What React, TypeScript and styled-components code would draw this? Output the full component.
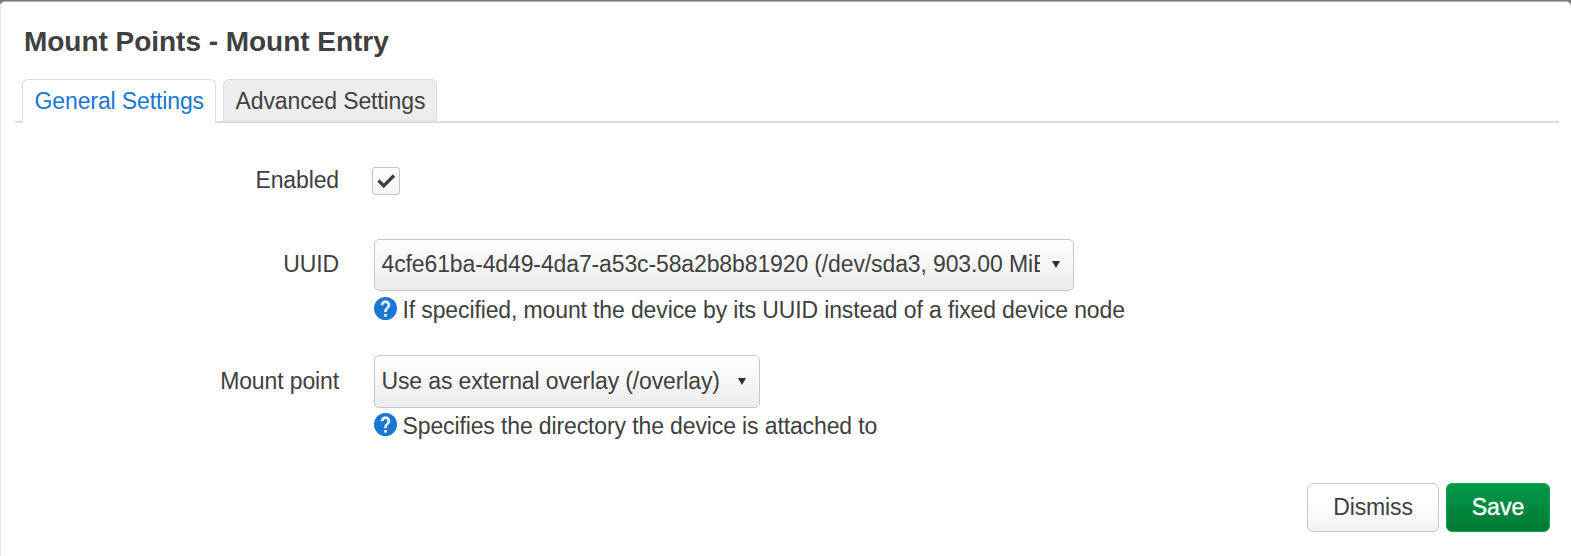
import React from 'react';
import styled, { createGlobalStyle, css } from 'styled-components';

const GlobalStyle = createGlobalStyle`
  * { box-sizing: border-box; }
  body {
    margin: 0;
    overflow: hidden;
    background: #7b7979;
    color: #404040;
    font-family: "Liberation Sans", Arial, Helvetica, sans-serif;
    font-size: 23px;
    line-height: 26px;
    letter-spacing: -0.123px;
    font-feature-settings: "liga" 1;
  }
`;

const Modal = styled.div`
  height: 556px;
  margin-top: 1px;
  padding: 0 12px 0 14px;
  display: flex;
  flex-direction: column;
  background: #fff;
  border: 1px solid #b4b2b2;
  border-left-color: #e8e8e8;
  border-right: 0;
  border-radius: 5px 5px 0 0;
`;

const Title = styled.h4`
  margin: 0;
  padding: 23px 0 0 9px;
  height: 77px;
  font-size: 28px;
  line-height: 34px;
  letter-spacing: -0.03px;
  font-weight: bold;
  white-space: nowrap;
`;

const Tabs = styled.ul`
  list-style: none;
  margin: 0;
  padding: 0 7px;
  display: flex;
  gap: 7px;
  height: 44px;
  border-bottom: 2px solid #dcdcdc;
`;

const Tab = styled.li<{ $active?: boolean; $width: number }>`
  width: ${p => p.$width}px;
  height: 42px;
  padding: 8px 0 0 11.6px;
  border: 1px solid #dcdcdc;
  border-bottom: 0;
  border-radius: 6px 6px 0 0;
  background: linear-gradient(#eee 92%, #e6e6e6);
  white-space: nowrap;
  ${p => p.$active && css`
    height: 44px;
    background: #fff;
    color: #1976d2;
  `}
`;

const Form = styled.div`
  padding-top: 43px;
`;

const Row = styled.div<{ $height: number }>`
  display: flex;
  height: ${p => p.$height}px;
`;

const Label = styled.label<{ $top: number }>`
  width: 324px;
  padding-top: ${p => p.$top}px;
  text-align: right;
  white-space: nowrap;
`;

const Field = styled.div`
  margin-left: 35px;
`;

const Checkbox = styled.span`
  display: block;
  width: 28px;
  height: 28px;
  margin: 1px 0 0 -2px;
  border: 1px solid #c4c4c4;
  border-radius: 3px;
  background: linear-gradient(#fff, #f5f5f5);
  svg { display: block; }
`;

const Select = styled.div<{ $width: number; $height: number }>`
  display: flex;
  align-items: center;
  width: ${p => p.$width}px;
  height: ${p => p.$height}px;
  padding: 0 13px 2px 6.5px;
  border: 1px solid #c6c6c6;
  border-radius: 5px;
  background: linear-gradient(#fff, #f6f6f6 50%, #ebebeb);
`;

const Value = styled.span`
  flex: 1;
  min-width: 0;
  overflow: hidden;
  white-space: nowrap;
`;

const Arrow = styled.svg`
  width: 8px;
  height: 7px;
  margin: 1px 0 0 12px;
  fill: #303030;
`;

const Help = styled.div<{ $top: number }>`
  display: flex;
  align-items: flex-start;
  gap: 5.5px;
  padding-top: ${p => p.$top}px;
  white-space: nowrap;
  svg { flex: none; }
`;

const Actions = styled.div`
  display: flex;
  justify-content: flex-end;
  gap: 7px;
  padding: 0 9px;
`;

const Button = styled.button<{ $primary?: boolean }>`
  width: 132px;
  height: 49px;
  padding: 0 0 2px;
  font: inherit;
  letter-spacing: inherit;
  color: #404040;
  border: 1px solid #c8c8c8;
  border-radius: 6px;
  background: linear-gradient(#fff 30%, #f3f3f3);
  ${p => p.$primary && css`
    width: 104px;
    letter-spacing: 0;
    color: #fff;
    -webkit-text-stroke: 0.4px #fff;
    border-color: #00a857;
    background: linear-gradient(#009a4b, #007832);
  `}
`;

const HelpIcon = () => (
  <svg width="23" height="23" viewBox="1.8 1.8 20.4 20.4">
    <circle cx="12" cy="12" r="10.2" fill="#1976d2" />
    <path
      fill="#fff"
      stroke="#fff"
      strokeWidth="0.3"
      d="M13 19h-2v-2h2v2zm2.07-7.75l-.9.92C13.45 12.9 13 13.5 13 15h-2v-.5c0-1.100.45-2.100 1.170-2.830l1.240-1.260c.37-.36.59-.86.59-1.410 0-1.100-.9-2-2-2s-2 .9-2 2H8c0-2.210 1.790-4 4-4s4 1.790 4 4c0 .88-.36 1.680-.93 2.250z"
    />
  </svg>
);

const Caret = () => (
  <Arrow viewBox="0 0 8 7"><path d="M0 0h8L4 7z" /></Arrow>
);

export default function App() {
  return (
    <>
      <GlobalStyle />
      <Modal>
        <Title>Mount Points - Mount Entry</Title>
        <Tabs>
          <Tab $active $width={194}>General Settings</Tab>
          <Tab $width={214}>Advanced Settings</Tab>
        </Tabs>
        <Form>
          <Row $height={73}>
            <Label $top={1}>Enabled</Label>
            <Field>
              <Checkbox>
                <svg width="26" height="26" viewBox="0 0 26 26">
                  <path d="M5.500 12.500l5.200 5.300L21 7.500" fill="none" stroke="#404040" strokeWidth="3.300" />
                </svg>
              </Checkbox>
            </Field>
          </Row>
          <Row $height={116}>
            <Label $top={12}>UUID</Label>
            <Field>
              <Select $width={700} $height={52}>
                <Value>4cfe61ba-4d49-4da7-a53c-58a2b8b81920 (/dev/sda3, 903.00 MiB)</Value>
                <Caret />
              </Select>
              <Help $top={6}><HelpIcon /><span>If specified, mount the device by its UUID instead of a fixed device node</span></Help>
            </Field>
          </Row>
          <Row $height={128}>
            <Label $top={13}>Mount point</Label>
            <Field>
              <Select $width={386} $height={53}>
                <Value>Use as external overlay (/overlay)</Value>
                <Caret />
              </Select>
              <Help $top={5}><HelpIcon /><span>Specifies the directory the device is attached to</span></Help>
            </Field>
          </Row>
        </Form>
        <Actions>
          <Button>Dismiss</Button>
          <Button $primary>Save</Button>
        </Actions>
      </Modal>
    </>
  );
}
